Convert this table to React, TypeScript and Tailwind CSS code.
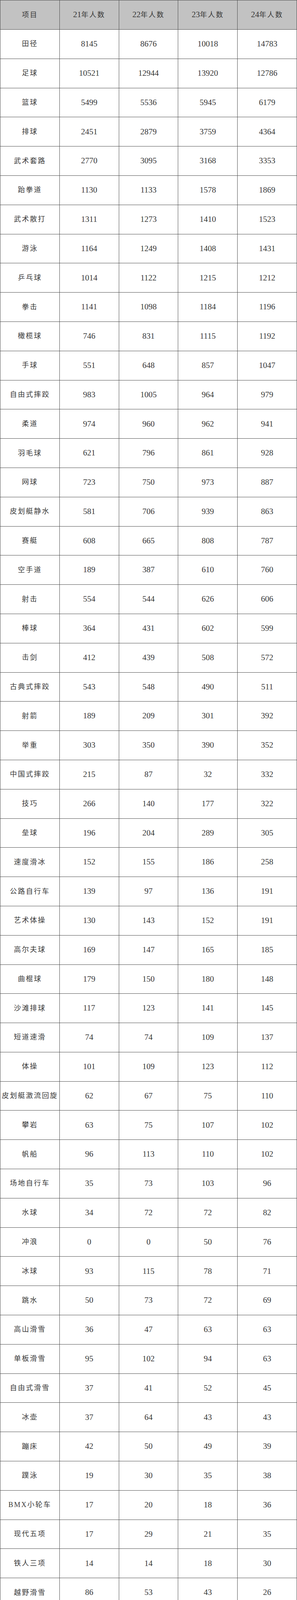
const rows: [string, number, number, number, number][] = [
  ['田径', 8145, 8676, 10018, 14783],
  ['足球', 10521, 12944, 13920, 12786],
  ['篮球', 5499, 5536, 5945, 6179],
  ['排球', 2451, 2879, 3759, 4364],
  ['武术套路', 2770, 3095, 3168, 3353],
  ['跆拳道', 1130, 1133, 1578, 1869],
  ['武术散打', 1311, 1273, 1410, 1523],
  ['游泳', 1164, 1249, 1408, 1431],
  ['乒乓球', 1014, 1122, 1215, 1212],
  ['拳击', 1141, 1098, 1184, 1196],
  ['橄榄球', 746, 831, 1115, 1192],
  ['手球', 551, 648, 857, 1047],
  ['自由式摔跤', 983, 1005, 964, 979],
  ['柔道', 974, 960, 962, 941],
  ['羽毛球', 621, 796, 861, 928],
  ['网球', 723, 750, 973, 887],
  ['皮划艇静水', 581, 706, 939, 863],
  ['赛艇', 608, 665, 808, 787],
  ['空手道', 189, 387, 610, 760],
  ['射击', 554, 544, 626, 606],
  ['棒球', 364, 431, 602, 599],
  ['击剑', 412, 439, 508, 572],
  ['古典式摔跤', 543, 548, 490, 511],
  ['射箭', 189, 209, 301, 392],
  ['举重', 303, 350, 390, 352],
  ['中国式摔跤', 215, 87, 32, 332],
  ['技巧', 266, 140, 177, 322],
  ['垒球', 196, 204, 289, 305],
  ['速度滑冰', 152, 155, 186, 258],
  ['公路自行车', 139, 97, 136, 191],
  ['艺术体操', 130, 143, 152, 191],
  ['高尔夫球', 169, 147, 165, 185],
  ['曲棍球', 179, 150, 180, 148],
  ['沙滩排球', 117, 123, 141, 145],
  ['短道速滑', 74, 74, 109, 137],
  ['体操', 101, 109, 123, 112],
  ['皮划艇激流回旋', 62, 67, 75, 110],
  ['攀岩', 63, 75, 107, 102],
  ['帆船', 96, 113, 110, 102],
  ['场地自行车', 35, 73, 103, 96],
  ['水球', 34, 72, 72, 82],
  ['冲浪', 0, 0, 50, 76],
  ['冰球', 93, 115, 78, 71],
  ['跳水', 50, 73, 72, 69],
  ['高山滑雪', 36, 47, 63, 63],
  ['单板滑雪', 95, 102, 94, 63],
  ['自由式滑雪', 37, 41, 52, 45],
  ['冰壶', 37, 64, 43, 43],
  ['蹦床', 42, 50, 49, 39],
  ['蹼泳', 19, 30, 35, 38],
  ['BMX小轮车', 17, 20, 18, 36],
  ['现代五项', 17, 29, 21, 35],
  ['铁人三项', 14, 14, 18, 30],
  ['越野滑雪', 86, 53, 43, 26],
  ['围棋', 34, 24, 20, 25],
  ['马术', 14, 14, 34, 24],
  ['花样滑冰', 15, 10, 39, 23],
  ['摩托艇', 3, 13, 16, 22],
  ['花样游泳', 5, 16, 17, 13],
  ['山地自行车', 15, 13, 22, 12],
  ['跳台滑雪', 14, 14, 12, 12],
  ['国际象棋', 28, 17, 20, 12],
  ['冬季两项', 10, 8, 7, 10],
  ['象棋', 4, 2, 2, 7],
  ['登山', 0, 0, 0, 1],
  ['公开水域游泳', 0, 0, 1, 0],
  ['滑水', 5, 4, 3, 0],
]

const total: [string, number, number, number, number] = ['总计', 46205, 50876, 57597, 63725]

// every cell draws its own right and bottom line; the wrapper adds left and top
const cell = 'flex items-center justify-center border-r border-b border-[#4d4d4d]'
const cjk = 'text-[18px] tracking-[2.5px]'
const num = 'text-[21px]'

function Row({ data }: { data: [string, number, number, number, number] }) {
  const [name, ...vals] = data
  return (
    <div className="grid grid-cols-5 h-[74.8px]">
      <div className={`${cell} ${cjk} whitespace-nowrap`}>{name}</div>
      {vals.map((v, i) => (
        <div key={i} className={`${cell} ${num}`}>
          {v}
        </div>
      ))}
    </div>
  )
}

export default function App() {
  return (
    <div
      className="w-[760px] bg-white text-[#383838] border-l border-t border-[#4d4d4d]"
      style={{ fontFamily: '"Liberation Serif", "Noto Sans CJK SC", serif' }}
    >
      <div className="grid grid-cols-5 h-[75px] bg-[#c2c2c2]">
        <div className={`${cell} ${cjk}`}>项目</div>
        {['21', '22', '23', '24'].map((y) => (
          <div key={y} className={cell}>
            <span className={num}>{y}</span>
            <span className={cjk}>年人数</span>
          </div>
        ))}
      </div>
      {rows.map((r) => (
        <Row key={r[0]} data={r} />
      ))}
      <Row data={total} />
    </div>
  )
}
